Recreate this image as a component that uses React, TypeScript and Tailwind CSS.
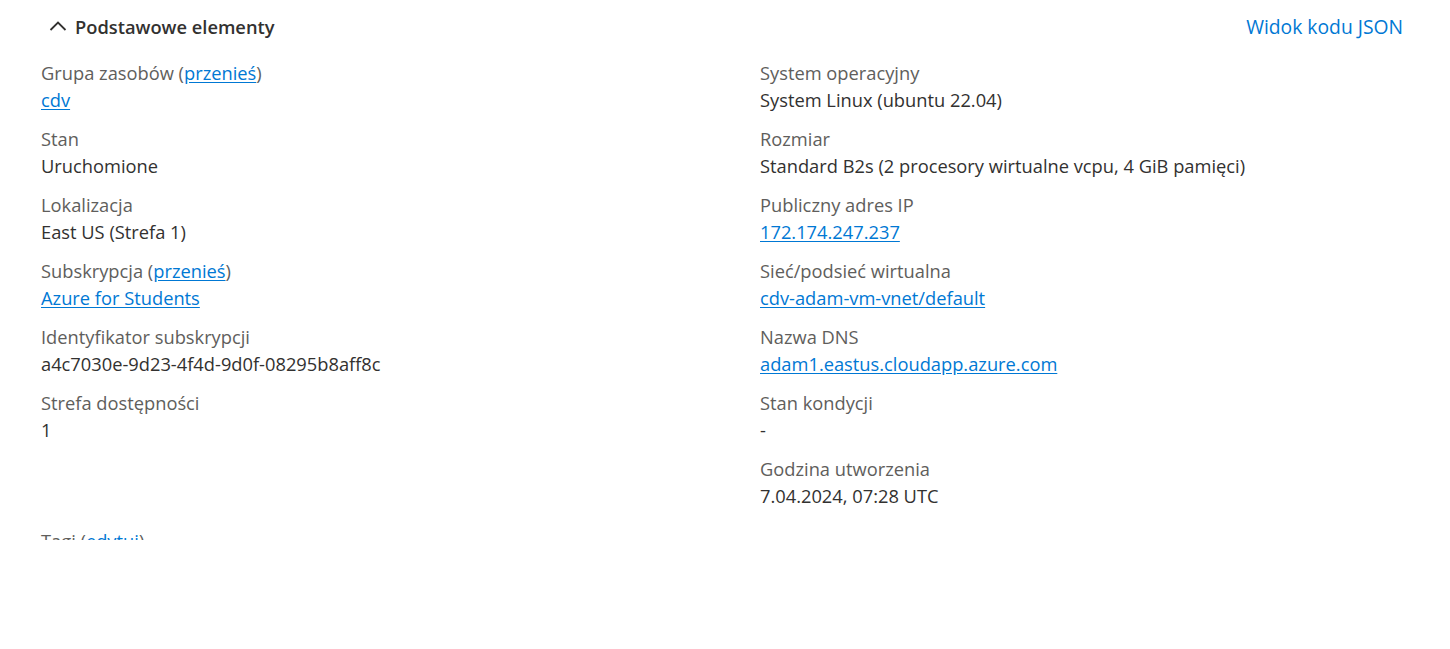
import React from "react";

type Part = { t: string; link?: boolean };
type Item = { label: Part[]; value: string; link?: boolean };

const left: Item[] = [
  { label: [{ t: "Grupa zasobów (" }, { t: "przenieś", link: true }, { t: ")" }], value: "cdv", link: true },
  { label: [{ t: "Stan" }], value: "Uruchomione" },
  { label: [{ t: "Lokalizacja" }], value: "East US (Strefa 1)" },
  { label: [{ t: "Subskrypcja (" }, { t: "przenieś", link: true }, { t: ")" }], value: "Azure for Students", link: true },
  { label: [{ t: "Identyfikator subskrypcji" }], value: "a4c7030e-9d23-4f4d-9d0f-08295b8aff8c" },
  { label: [{ t: "Strefa dostępności" }], value: "1" },
];

const right: Item[] = [
  { label: [{ t: "System operacyjny" }], value: "System Linux (ubuntu 22.04)" },
  { label: [{ t: "Rozmiar" }], value: "Standard B2s (2 procesory wirtualne vcpu, 4 GiB pamięci)" },
  { label: [{ t: "Publiczny adres IP" }], value: "172.174.247.237", link: true },
  { label: [{ t: "Sieć/podsieć wirtualna" }], value: "cdv-adam-vm-vnet/default", link: true },
  { label: [{ t: "Nazwa DNS" }], value: "adam1.eastus.cloudapp.azure.com", link: true },
  { label: [{ t: "Stan kondycji" }], value: "-" },
  { label: [{ t: "Godzina utworzenia" }], value: "7.04.2024, 07:28 UTC" },
];

function Field({ item }: { item: Item }) {
  return (
    <div className="flex flex-col">
      <div className="text-[#605e5c]">
        {item.label.map((p, i) =>
          p.link ? (
            <a key={i} className="text-[#0078d4] underline underline-offset-2">{p.t}</a>
          ) : (
            <span key={i}>{p.t}</span>
          )
        )}
      </div>
      <div className={item.link ? "text-[#0078d4] underline underline-offset-2 self-start" : "text-[#323130]"}>
        {item.value}
      </div>
    </div>
  );
}

export default function App() {
  return (
    <div
      className="w-[1450px] h-[649px] bg-white text-[18.3px] leading-[27px]"
      style={{ fontFamily: '"Open Sans", "Noto Sans", sans-serif' }}
    >
      <div className="h-[540px] overflow-hidden pl-[41px] pr-[47px]">
        <div className="flex items-center justify-between pt-[12px] h-[40px]">
          <div className="flex items-center gap-[8px] pl-[8px]">
            <svg width="18" height="12" viewBox="0 0 18 12" fill="none">
              <path d="M1.5 10 L9 2.5 L16.5 10" stroke="#323130" strokeWidth="1.8" />
            </svg>
            <span className="font-semibold text-[#323130]">Podstawowe elementy</span>
          </div>
          <a className="text-[#0078d4] text-[19.3px]">Widok kodu JSON</a>
        </div>
        <div className="grid grid-cols-[719px_1fr] mt-[19px]">
          <div className="flex flex-col gap-[12px]">
            {left.map((it, i) => (
              <Field key={i} item={it} />
            ))}
          </div>
          <div className="flex flex-col gap-[12px]">
            {right.map((it, i) => (
              <Field key={i} item={it} />
            ))}
          </div>
        </div>
        <div className="mt-[18px] text-[#605e5c]">
          Tagi (<a className="text-[#0078d4] underline underline-offset-2">edytuj</a>)
        </div>
      </div>
    </div>
  );
}
